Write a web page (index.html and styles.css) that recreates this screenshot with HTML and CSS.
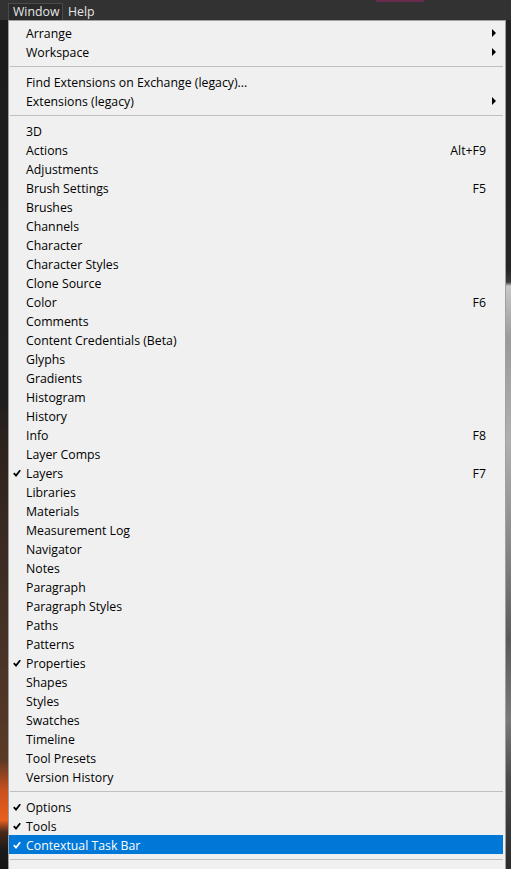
FILE: index.html
```html
<!DOCTYPE html>
<html lang="en">
<head>
<meta charset="utf-8">
<title>Window menu</title>
<link rel="stylesheet" href="styles.css">
</head>
<body>
<div class="app">
  <div class="menubar">
    <div class="accent"></div>
    <span class="top-item active">Window</span>
    <span class="top-item">Help</span>
  </div>
  <div class="workspace">
    <div class="strip-left"></div>
    <div class="strip-right"></div>
  </div>

  <div class="dropdown">
    <div class="row"><span class="chk"></span><span class="label">Arrange</span><span class="arrow"></span></div>
    <div class="row"><span class="chk"></span><span class="label">Workspace</span><span class="arrow"></span></div>
    <div class="sep"></div>
    <div class="row"><span class="chk"></span><span class="label">Find Extensions on Exchange (legacy)...</span></div>
    <div class="row"><span class="chk"></span><span class="label">Extensions (legacy)</span><span class="arrow"></span></div>
    <div class="sep"></div>
    <div class="row"><span class="chk"></span><span class="label">3D</span></div>
    <div class="row"><span class="chk"></span><span class="label">Actions</span><span class="key">Alt+F9</span></div>
    <div class="row"><span class="chk"></span><span class="label">Adjustments</span></div>
    <div class="row"><span class="chk"></span><span class="label">Brush Settings</span><span class="key">F5</span></div>
    <div class="row"><span class="chk"></span><span class="label">Brushes</span></div>
    <div class="row"><span class="chk"></span><span class="label">Channels</span></div>
    <div class="row"><span class="chk"></span><span class="label">Character</span></div>
    <div class="row"><span class="chk"></span><span class="label">Character Styles</span></div>
    <div class="row"><span class="chk"></span><span class="label">Clone Source</span></div>
    <div class="row"><span class="chk"></span><span class="label">Color</span><span class="key">F6</span></div>
    <div class="row"><span class="chk"></span><span class="label">Comments</span></div>
    <div class="row"><span class="chk"></span><span class="label">Content Credentials (Beta)</span></div>
    <div class="row"><span class="chk"></span><span class="label">Glyphs</span></div>
    <div class="row"><span class="chk"></span><span class="label">Gradients</span></div>
    <div class="row"><span class="chk"></span><span class="label">Histogram</span></div>
    <div class="row"><span class="chk"></span><span class="label">History</span></div>
    <div class="row"><span class="chk"></span><span class="label">Info</span><span class="key">F8</span></div>
    <div class="row"><span class="chk"></span><span class="label">Layer Comps</span></div>
    <div class="row"><span class="chk"><svg viewBox="0 0 8 8" width="8" height="8"><path d="M0.8 4.2 L3 6.6 L7.2 1.2" /></svg></span><span class="label">Layers</span><span class="key">F7</span></div>
    <div class="row"><span class="chk"></span><span class="label">Libraries</span></div>
    <div class="row"><span class="chk"></span><span class="label">Materials</span></div>
    <div class="row"><span class="chk"></span><span class="label">Measurement Log</span></div>
    <div class="row"><span class="chk"></span><span class="label">Navigator</span></div>
    <div class="row"><span class="chk"></span><span class="label">Notes</span></div>
    <div class="row"><span class="chk"></span><span class="label">Paragraph</span></div>
    <div class="row"><span class="chk"></span><span class="label">Paragraph Styles</span></div>
    <div class="row"><span class="chk"></span><span class="label">Paths</span></div>
    <div class="row"><span class="chk"></span><span class="label">Patterns</span></div>
    <div class="row"><span class="chk"><svg viewBox="0 0 8 8" width="8" height="8"><path d="M0.8 4.2 L3 6.6 L7.2 1.2" /></svg></span><span class="label">Properties</span></div>
    <div class="row"><span class="chk"></span><span class="label">Shapes</span></div>
    <div class="row"><span class="chk"></span><span class="label">Styles</span></div>
    <div class="row"><span class="chk"></span><span class="label">Swatches</span></div>
    <div class="row"><span class="chk"></span><span class="label">Timeline</span></div>
    <div class="row"><span class="chk"></span><span class="label">Tool Presets</span></div>
    <div class="row"><span class="chk"></span><span class="label">Version History</span></div>
    <div class="sep"></div>
    <div class="row"><span class="chk"><svg viewBox="0 0 8 8" width="8" height="8"><path d="M0.8 4.2 L3 6.6 L7.2 1.2" /></svg></span><span class="label">Options</span></div>
    <div class="row"><span class="chk"><svg viewBox="0 0 8 8" width="8" height="8"><path d="M0.8 4.2 L3 6.6 L7.2 1.2" /></svg></span><span class="label">Tools</span></div>
    <div class="row selected"><span class="chk"><svg viewBox="0 0 8 8" width="8" height="8"><path d="M0.8 4.2 L3 6.6 L7.2 1.2" /></svg></span><span class="label">Contextual Task Bar</span></div>
    <div class="sep"></div>
  </div>
</div>
</body>
</html>
```

FILE: styles.css
```css
html, body {
  margin: 0;
  padding: 0;
  background: #1e1e1e;
  overflow: hidden;
}

.app {
  position: relative;
  width: 511px;
  height: 869px;
  display: flex;
  flex-direction: column;
  font-family: "Open Sans", "Noto Sans", sans-serif;
}

.menubar {
  position: relative;
  height: 20px;
  flex: none;
  background: #323232;
  display: flex;
  align-items: flex-end;
  padding-left: 8px;
}

.accent {
  position: absolute;
  left: 376px;
  top: 0;
  width: 48px;
  height: 2px;
  background: #6a2a4c;
}

.top-item {
  color: #e6e6e6;
  font-size: 12.3px;
  line-height: 16px;
  height: 16px;
  padding: 0 4px;
  border: 1px solid transparent;
  border-bottom: 0;
}

.top-item.active {
  background: #2a2a2a;
  border-color: #4a4a4a;
  width: 45px;
  box-sizing: content-box;
}

.workspace {
  flex: 1;
  display: flex;
  justify-content: space-between;
}

.strip-left {
  width: 8px;
  background: linear-gradient(to bottom,
    #1c1c1c 0px, #1f1f1f 380px, #2c221c 420px, #3a2a22 520px,
    #4a3326 640px, #5a3a26 740px, #c8501e 770px, #e8601c 800px,
    #4a2a1a 812px, #1a1a1a 830px, #161616 849px);
}

.strip-right {
  width: 5px;
  background: linear-gradient(to bottom,
    #222 0px, #252525 250px, #3a3a3a 262px, #c8c8c8 266px,
    #9a9a9a 320px, #b0b0b0 420px, #8a8a8a 520px, #5a5a5a 620px,
    #7a7a7a 700px, #4a4a4a 760px, #2a2a2a 849px);
}

.dropdown {
  position: absolute;
  left: 8px;
  top: 20px;
  width: 498px;
  height: 860px;
  background: #f0f0f0;
  border: 1px solid #a0a0a0;
  padding-top: 2px;
  box-sizing: border-box;
  font-size: 12.3px;
  color: #000;
}

.row {
  height: 19px;
  display: flex;
  align-items: center;
  padding-right: 17px;
  margin-right: 2px;
  box-sizing: border-box;
}

.chk {
  width: 17px;
  flex: none;
  display: flex;
  padding-left: 4px;
  box-sizing: border-box;
}

.chk svg path {
  fill: none;
  stroke: #000;
  stroke-width: 1.8;
}

.label {
  flex: 1;
  white-space: nowrap;
  padding-top: 2px;
}

.key {
  white-space: nowrap;
  padding-top: 2px;
}

.arrow {
  width: 0;
  height: 0;
  border-top: 4px solid transparent;
  border-bottom: 4px solid transparent;
  border-left: 4px solid #000;
  margin-right: -10px;
}

.row.selected {
  background: #0078d7;
  color: #fff;
}

.row.selected .chk svg path {
  stroke: #fff;
}

.sep {
  height: 1px;
  background: #bfbfbf;
  margin: 5px 2px 5px 1px;
}
```
